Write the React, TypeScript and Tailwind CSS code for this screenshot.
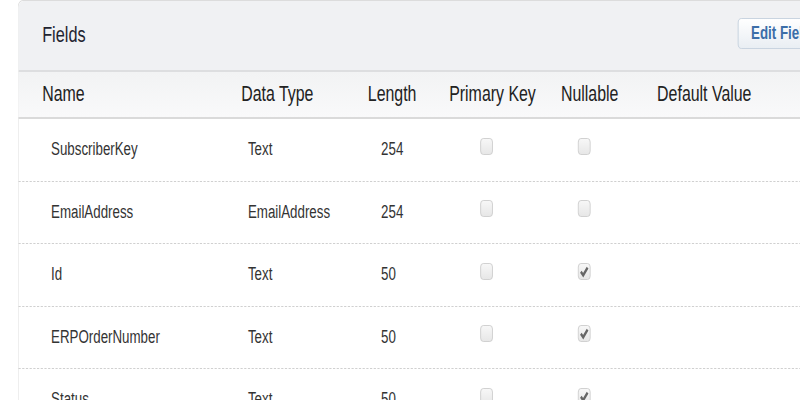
import React from 'react';

type Field = {
  name: string;
  type: string;
  length: string;
  primary: boolean;
  nullable: boolean;
};

const fields: Field[] = [
  { name: 'SubscriberKey', type: 'Text', length: '254', primary: false, nullable: false },
  { name: 'EmailAddress', type: 'EmailAddress', length: '254', primary: false, nullable: false },
  { name: 'Id', type: 'Text', length: '50', primary: false, nullable: true },
  { name: 'ERPOrderNumber', type: 'Text', length: '50', primary: false, nullable: true },
  { name: 'Status', type: 'Text', length: '50', primary: false, nullable: true },
];

function Box({ checked }: { checked: boolean }) {
  return (
    <span className="-mt-[7px] flex h-[17px] w-[17px] items-center justify-center rounded-[4px] border border-[#cacaca] bg-gradient-to-b from-[#f7f7f7] to-[#e7e7e7]">
      {checked && (
        <svg width="13" height="13" viewBox="0 0 12 12">
          <path d="M1.8 6.3 L4.7 9.4 L10.2 2.4" fill="none" stroke="#666666" strokeWidth="2.7" />
        </svg>
      )}
    </span>
  );
}

export default function App() {
  return (
    <div className="h-[400px] w-[800px] overflow-hidden bg-white font-['Liberation_Sans',Arial,sans-serif]">
      {/* page is squeezed horizontally like the source capture */}
      <div className="w-[1081px] origin-top-left scale-x-[0.74]">
        <div className="ml-[24px] w-[1120px] rounded-tl-[7px] border border-b-0 border-[#dcdcdc]">
          {/* Header */}
          <div className="flex h-[71px] items-center rounded-tl-[7px] border-b-2 border-[#dddee0] bg-[#f0f1f3] pl-[32px]">
            <span className="w-[940px] pb-[2px] text-[22px] text-[#1f2430]">Fields</span>
            <button className="-mt-[5px] h-[31px] rounded-[5px] border border-[#c3d0dc] bg-gradient-to-b from-[#ffffff] to-[#e9eef3] px-[17px] text-[18px] font-bold text-[#3c6ea8]">
              Edit Fields
            </button>
          </div>

          {/* Column headings */}
          <div className="grid h-[47px] grid-cols-[269px_171px_110px_151px_130px_1fr] items-center border-b-2 border-[#dadada] bg-gradient-to-b from-[#f2f3f4] to-[#f9f9fa] pl-[32px] text-[21.5px] text-[#222222]">
            <span>Name</span>
            <span>Data Type</span>
            <span>Length</span>
            <span>Primary Key</span>
            <span>Nullable</span>
            <span>Default Value</span>
          </div>

          {/* Rows */}
          {fields.map(f => (
            <div
              key={f.name}
              className="grid h-[62.5px] grid-cols-[269px_171px_110px_151px_130px_1fr] items-center border-b border-dashed border-[#c9c9c9] pl-[32px] text-[18px] text-[#333333]"
            >
              <span className="pl-[12px]">{f.name}</span>
              <span className="pl-[9px]">{f.type}</span>
              <span className="pl-[18px]">{f.length}</span>
              <span className="pl-[42px]"><Box checked={f.primary} /></span>
              <span className="pl-[23px]"><Box checked={f.nullable} /></span>
              <span />
            </div>
          ))}
        </div>
      </div>
    </div>
  );
}
